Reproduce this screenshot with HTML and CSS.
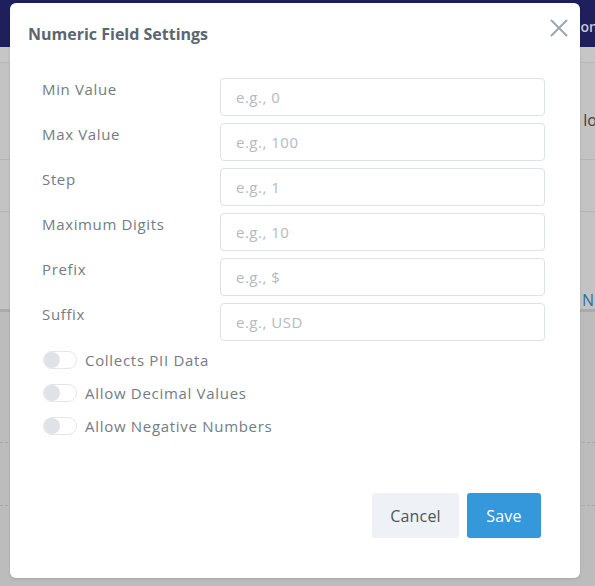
FILE: index.html
```html
<!DOCTYPE html>
<html lang="en">
<head>
<meta charset="utf-8">
<title>Numeric Field Settings</title>
<link rel="stylesheet" href="styles.css">
</head>
<body>
<div class="page">
  <header class="topbar"><span class="topbar-text">on</span></header>
  <div class="strip"></div>
  <div class="bg-row bg-row-1"><span class="bg-text">lo</span></div>
  <div class="bg-row bg-row-2"></div>
  <div class="bg-row bg-row-3"><span class="bg-link">N</span></div>
  <div class="bg-lower">
    <div class="bg-sep bg-sep-1"></div>
    <div class="bg-sep bg-sep-2"></div>
  </div>
</div>

<div class="modal" role="dialog" aria-labelledby="modal-title">
  <div class="modal-header">
    <h2 id="modal-title" class="modal-title">Numeric Field Settings</h2>
    <button class="close" aria-label="Close">
      <svg width="18" height="18" viewBox="0 0 18 18"><path d="M1.5 1.5 L16.5 16.5 M16.5 1.5 L1.5 16.5" stroke="#9ea7af" stroke-width="2" fill="none" stroke-linecap="round"/></svg>
    </button>
  </div>

  <div class="fields">
    <label class="label">Min Value</label>
    <input class="input" type="text" placeholder="e.g., 0">
    <label class="label">Max Value</label>
    <input class="input" type="text" placeholder="e.g., 100">
    <label class="label">Step</label>
    <input class="input" type="text" placeholder="e.g., 1">
    <label class="label">Maximum Digits</label>
    <input class="input" type="text" placeholder="e.g., 10">
    <label class="label">Prefix</label>
    <input class="input" type="text" placeholder="e.g., $">
    <label class="label">Suffix</label>
    <input class="input" type="text" placeholder="e.g., USD">
  </div>

  <div class="toggles">
    <div class="toggle-row"><span class="toggle"><span class="knob"></span></span><span class="toggle-label">Collects PII Data</span></div>
    <div class="toggle-row"><span class="toggle"><span class="knob"></span></span><span class="toggle-label">Allow Decimal Values</span></div>
    <div class="toggle-row"><span class="toggle"><span class="knob"></span></span><span class="toggle-label">Allow Negative Numbers</span></div>
  </div>

  <div class="footer">
    <button class="btn btn-cancel">Cancel</button>
    <button class="btn btn-save">Save</button>
  </div>
</div>
</body>
</html>
```

FILE: styles.css
```css
* { box-sizing: border-box; }

html, body {
  margin: 0;
  padding: 0;
  width: 595px;
  height: 586px;
  overflow: hidden;
  font-family: "Open Sans", "Noto Sans", sans-serif;
}

body {
  background: #bbbbbb;
  position: relative;
}

/* dimmed page behind the dialog */
.page {
  display: flex;
  flex-direction: column;
  height: 586px;
}

.topbar {
  height: 47px;
  background: #1e1f5c;
  display: flex;
  justify-content: flex-end;
  align-items: center;
  padding-top: 6px;
}

.topbar-text {
  color: #c9c9d6;
  font-size: 14px;
  font-weight: 600;
  margin-right: -3px;
}

.strip {
  height: 16px;
  background: #c6c6c6;
  border-bottom: 1px solid #b9b9b9;
}

.bg-row {
  background: #c3c3c3;
  display: flex;
  justify-content: flex-end;
  align-items: center;
  border-bottom: 1px solid #b4b4b4;
}

.bg-row-1 { height: 97px; padding-top: 18px; }
.bg-row-2 { height: 52px; }
.bg-row-3 {
  height: 100px;
  align-items: flex-end;
  padding-bottom: 0;
  border-bottom: 3px solid #aaaaaa;
}

.bg-text {
  color: #404040;
  font-size: 16px;
  margin-right: -2px;
}

.bg-link {
  color: #2c6fa0;
  font-size: 16px;
  line-height: 18px;
  margin-right: 1px;
}

.bg-lower {
  flex: 1;
  background: #bcbcbc;
  display: flex;
  flex-direction: column;
}

.bg-sep {
  border-top: 1px dashed #a8a8a8;
}

.bg-sep-1 { margin-top: 130px; }
.bg-sep-2 { margin-top: 62px; }

/* dialog */
.modal {
  position: absolute;
  left: 10px;
  top: 3px;
  width: 570px;
  height: 575px;
  background: #ffffff;
  border-radius: 6px;
  display: flex;
  flex-direction: column;
  box-shadow: 0 1px 3px rgba(0,0,0,0.12);
}

.modal-header {
  display: flex;
  justify-content: space-between;
  align-items: flex-start;
  padding: 21px 10px 0 18px;
}

.modal-title {
  margin: 0;
  font-size: 16px;
  line-height: 20px;
  font-weight: 700;
  color: #5b6670;
}

.close {
  background: none;
  border: 0;
  padding: 0;
  margin-top: -7px;
  width: 22px;
  height: 22px;
  display: flex;
  align-items: center;
  justify-content: center;
  cursor: pointer;
}

.fields {
  display: grid;
  grid-template-columns: 178px 325px;
  grid-auto-rows: 38px;
  row-gap: 7px;
  padding: 0 0 0 32px;
  margin-top: 34px;
}

.label {
  font-size: 15px;
  line-height: 20px;
  letter-spacing: 0.65px;
  color: #737c85;
  padding-top: 1px;
}

.input {
  height: 38px;
  border: 1px solid #dde2e7;
  border-radius: 4px;
  padding: 0 15px;
  font-family: inherit;
  font-size: 15px;
  letter-spacing: 0.5px;
  color: #444;
  outline: none;
}

.input::placeholder { color: #b3bac2; }

.toggles {
  display: flex;
  flex-direction: column;
  gap: 13px;
  padding-left: 33px;
  margin-top: 9px;
}

.toggle-row {
  display: flex;
  align-items: center;
  height: 20px;
  gap: 8px;
}

.toggle {
  width: 34px;
  height: 18px;
  border: 1px solid #e3e6ea;
  border-radius: 9px;
  background: #ffffff;
  display: flex;
  align-items: center;
}

.knob {
  width: 16px;
  height: 16px;
  border-radius: 50%;
  background: #dfe2e6;
}

.toggle-label {
  font-size: 15px;
  line-height: 20px;
  letter-spacing: 0.7px;
  color: #737c85;
}

.footer {
  margin-top: auto;
  display: flex;
  justify-content: flex-end;
  gap: 8px;
  padding: 0 39px 40px 0;
}

.btn {
  height: 45px;
  border: 0;
  border-radius: 3px;
  font-family: inherit;
  font-size: 16px;
  letter-spacing: 0.2px;
  padding: 0 12px;
  cursor: pointer;
}

.btn-cancel {
  background: #eef1f5;
  color: #4d555d;
  width: 87px;
}

.btn-save {
  background: #3498db;
  color: #ffffff;
  width: 74px;
}
```
